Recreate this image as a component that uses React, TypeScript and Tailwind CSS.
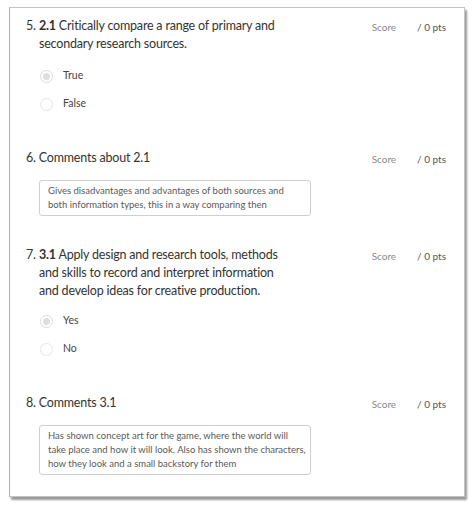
import React from "react";

function Score() {
  return (
    <div className="flex shrink-0 gap-[21px] pt-[1px] text-[10px] leading-[18px]">
      <span className="text-[#8a8a8a]">Score</span>
      <span className="text-[#555]">/ 0 pts</span>
    </div>
  );
}

function Radio({ label, selected }: { label: string; selected?: boolean }) {
  return (
    <div className="flex h-[28px] items-center">
      <span
        className={
          "flex h-[13px] w-[13px] items-center justify-center rounded-full border " +
          (selected ? "border-[#dcdcdc]" : "border-[#e6e6e6]")
        }
      >
        {selected && <span className="h-[7px] w-[7px] rounded-full bg-[#dedede]" />}
      </span>
      <span className="ml-[10px] text-[10.5px] text-[#444]">{label}</span>
    </div>
  );
}

function Comment({ lines }: { lines: string[] }) {
  return (
    <div className="ml-[13px] mt-[13px] w-[272px] whitespace-nowrap rounded-[3px] border border-[#cfcfcf] px-[8px] py-[3px] text-[9.5px] leading-[14px] text-[#5a5a5a]">
      {lines.map((l, i) => (
        <div key={i}>{l}</div>
      ))}
    </div>
  );
}

const titleCls = "text-[12.5px] leading-[18px] tracking-[-0.2px] text-[#333]";

export default function App() {
  return (
    <div
      className="h-[506px] w-[472px] bg-white pl-[9px] pt-[7px]"
      style={{ fontFamily: 'Lato, "Open Sans", sans-serif' }}
    >
      <div className="h-[490px] w-[456px] border border-[#c4c4c4] border-l-[#b0b0b0] bg-white pl-[16px] pr-[18px] pt-[9px] shadow-[2px_3px_2px_rgba(0,0,0,0.4)]">
        {/* Q5 */}
        <div className="flex justify-between">
          <div>
            <div className={"flex " + titleCls}>
              <span className="w-[13px] shrink-0">5.</span>
              <span>
                <b className="font-bold">2.1</b> Critically compare a range of primary and
                <br />
                secondary research sources.
              </span>
            </div>
            <div className="ml-[14px] mt-[9px]">
              <Radio label="True" selected />
              <Radio label="False" />
            </div>
          </div>
          <Score />
        </div>

        {/* Q6 */}
        <div className="mt-[31px] flex justify-between">
          <div>
            <div className={titleCls}>6. Comments about 2.1</div>
            <Comment
              lines={[
                "Gives disadvantages and advantages of both sources and",
                "both information types, this in a way comparing then",
              ]}
            />
          </div>
          <Score />
        </div>

        {/* Q7 */}
        <div className="mt-[30px] flex justify-between">
          <div>
            <div className={"flex " + titleCls}>
              <span className="w-[13px] shrink-0">7.</span>
              <span>
                <b className="font-bold">3.1</b> Apply design and research tools, methods
                <br />
                and skills to record and interpret information
                <br />
                and develop ideas for creative production.
              </span>
            </div>
            <div className="ml-[14px] mt-[7px]">
              <Radio label="Yes" selected />
              <Radio label="No" />
            </div>
          </div>
          <Score />
        </div>

        {/* Q8 */}
        <div className="mt-[31px] flex justify-between">
          <div>
            <div className={titleCls}>8. Comments 3.1</div>
            <Comment
              lines={[
                "Has shown concept art for the game, where the world will",
                "take place and how it will look. Also has shown the characters,",
                "how they look and a small backstory for them",
              ]}
            />
          </div>
          <Score />
        </div>
      </div>
    </div>
  );
}
